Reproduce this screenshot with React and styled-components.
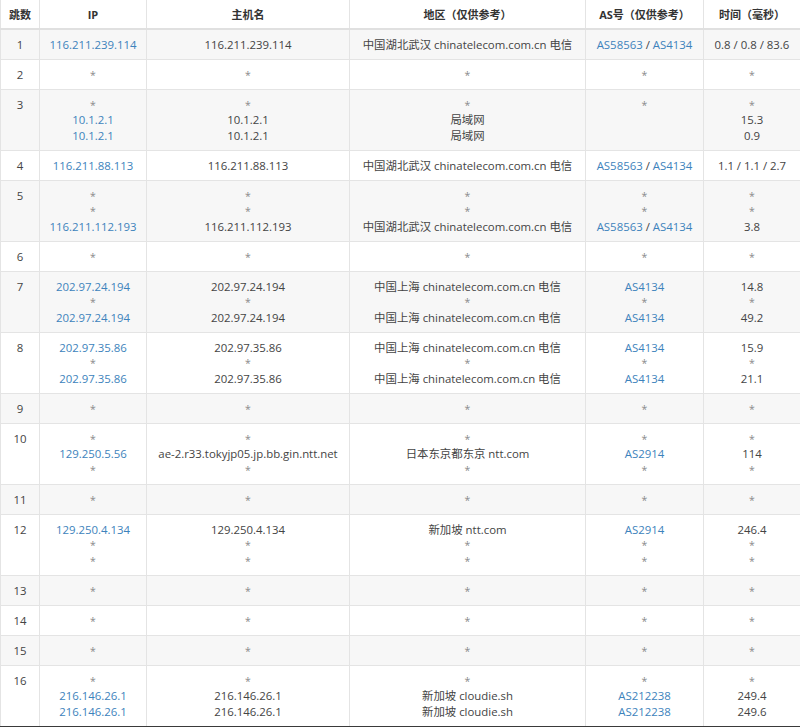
import React from 'react';
import styled, { createGlobalStyle } from 'styled-components';

const GlobalStyle = createGlobalStyle`
  html,
  body {
    margin: 0;
    padding: 0;
    background: #fff;
  }
  body {
    font-family: 'Open Sans', 'Noto Sans CJK SC', sans-serif;
    color: #333;
  }
`;

const columns = [
  { key: 'hop', title: '跳数', width: 39 },
  { key: 'ip', title: 'IP', width: 107 },
  { key: 'host', title: '主机名', width: 203 },
  { key: 'region', title: '地区（仅供参考）', width: 236 },
  { key: 'asn', title: 'AS号（仅供参考）', width: 118 },
  { key: 'time', title: '时间（毫秒）', width: 97 }
];

const CT = '中国湖北武汉 chinatelecom.com.cn 电信';
const SH = '中国上海 chinatelecom.com.cn 电信';
const CT_AS = ['AS58563', 'AS4134'];

const star = { ip: ['*'], host: ['*'], region: ['*'], asn: ['*'], time: ['*'] };

const hops = [
  { ip: ['116.211.239.114'], host: ['116.211.239.114'], region: [CT], asn: [CT_AS], time: ['0.8 / 0.8 / 83.6'] },
  star,
  {
    ip: ['*', '10.1.2.1', '10.1.2.1'],
    host: ['*', '10.1.2.1', '10.1.2.1'],
    region: ['*', '局域网', '局域网'],
    asn: ['*'],
    time: ['*', '15.3', '0.9']
  },
  { ip: ['116.211.88.113'], host: ['116.211.88.113'], region: [CT], asn: [CT_AS], time: ['1.1 / 1.1 / 2.7'] },
  {
    ip: ['*', '*', '116.211.112.193'],
    host: ['*', '*', '116.211.112.193'],
    region: ['*', '*', CT],
    asn: ['*', '*', CT_AS],
    time: ['*', '*', '3.8']
  },
  star,
  {
    ip: ['202.97.24.194', '*', '202.97.24.194'],
    host: ['202.97.24.194', '*', '202.97.24.194'],
    region: [SH, '*', SH],
    asn: [['AS4134'], '*', ['AS4134']],
    time: ['14.8', '*', '49.2']
  },
  {
    ip: ['202.97.35.86', '*', '202.97.35.86'],
    host: ['202.97.35.86', '*', '202.97.35.86'],
    region: [SH, '*', SH],
    asn: [['AS4134'], '*', ['AS4134']],
    time: ['15.9', '*', '21.1']
  },
  star,
  {
    ip: ['*', '129.250.5.56', '*'],
    host: ['*', 'ae-2.r33.tokyjp05.jp.bb.gin.ntt.net', '*'],
    region: ['*', '日本东京都东京 ntt.com', '*'],
    asn: ['*', ['AS2914'], '*'],
    time: ['*', '114', '*']
  },
  star,
  {
    ip: ['129.250.4.134', '*', '*'],
    host: ['129.250.4.134', '*', '*'],
    region: ['新加坡 ntt.com', '*', '*'],
    asn: [['AS2914'], '*', '*'],
    time: ['246.4', '*', '*']
  },
  star,
  star,
  star,
  {
    ip: ['*', '216.146.26.1', '216.146.26.1'],
    host: ['*', '216.146.26.1', '216.146.26.1'],
    region: ['*', '新加坡 cloudie.sh', '新加坡 cloudie.sh'],
    asn: ['*', ['AS212238'], ['AS212238']],
    time: ['*', '249.4', '249.6']
  }
];

const Page = styled.div`
  width: 800px;
  border-bottom: 2px solid #3a3a3a;
`;

const Table = styled.table`
  width: 800px;
  table-layout: fixed;
  border-collapse: collapse;
  font-size: 11.4px;
`;

const HeadCell = styled.th`
  height: 28px;
  padding: 0 4px;
  font-size: 11px;
  font-weight: 700;
  color: #333;
  text-align: center;
  vertical-align: middle;
  white-space: nowrap;
  background: #fff;
  border: 1px solid #e4e4e4;
  border-top: none;
  border-bottom: 2px solid #e0e0e0;
`;

const Row = styled.tr`
  background: ${props => (props.striped ? '#f7f7f7' : '#fff')};
`;

const Cell = styled.td`
  padding: 6.75px 4px;
  line-height: 15.5px;
  text-align: center;
  vertical-align: top;
  white-space: nowrap;
  color: #444;
  border: 1px solid #e4e4e4;
  border-bottom: ${props => (props.last ? 'none' : '1px solid #e4e4e4')};
`;

const Line = styled.div`
  height: 15.5px;
`;

const Star = styled.span`
  color: #8a8a8a;
  font-size: 10.5px;
`;

const Link = styled.a`
  color: #3d83bc;
  text-decoration: none;
`;

const renderValue = (col, value) => {
  if (value === '*') return <Star>*</Star>;
  if (col === 'ip') return <Link href="#">{value}</Link>;
  if (col === 'asn') {
    return value.map((as, i) => (
      <React.Fragment key={as}>
        {i > 0 && ' / '}
        <Link href="#">{as}</Link>
      </React.Fragment>
    ));
  }
  return value;
};

const App = () => {
  return (
    <Page>
      <GlobalStyle />
      <Table>
        <colgroup>
          {columns.map(col => (
            <col key={col.key} style={{ width: col.width }} />
          ))}
        </colgroup>
        <thead>
          <tr>
            {columns.map(col => (
              <HeadCell key={col.key}>{col.title}</HeadCell>
            ))}
          </tr>
        </thead>
        <tbody>
          {hops.map((hop, i) => (
            <Row key={i} striped={i % 2 === 0}>
              <Cell last={i === hops.length - 1}>{i + 1}</Cell>
              {columns.slice(1).map(col => (
                <Cell key={col.key} last={i === hops.length - 1}>
                  {hop[col.key].map((value, j) => (
                    <Line key={j}>{renderValue(col.key, value)}</Line>
                  ))}
                </Cell>
              ))}
            </Row>
          ))}
        </tbody>
      </Table>
    </Page>
  );
};

export default App;
